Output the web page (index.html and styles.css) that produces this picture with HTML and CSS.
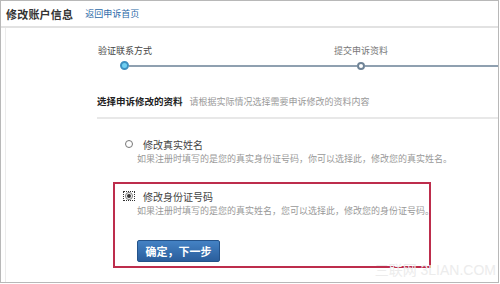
FILE: index.html
```html
<!DOCTYPE html>
<html lang="zh-CN">
<head>
  <meta charset="UTF-8">
  <title>修改账户信息</title>
  <link rel="stylesheet" href="styles.css">
</head>
<body>

  <div class="page">
    <div class="header">
      <span class="title">修改账户信息</span>
      <a class="back" href="#">返回申诉首页</a>
    </div>

    <div class="content">
      <div class="steps">
        <div class="labels">
          <span class="step-label current">验证联系方式</span>
          <span class="step-label">提交申诉资料</span>
        </div>
        <div class="track">
          <span class="dot active"></span>
          <span class="line first"></span>
          <span class="dot"></span>
          <span class="line rest"></span>
        </div>
      </div>

      <div class="section">
        <div class="section-head">
          <span class="section-title">选择申诉修改的资料</span>
          <span class="section-note">请根据实际情况选择需要申诉修改的资料内容</span>
        </div>

        <div class="options">
          <div class="option">
            <div class="option-head">
              <span class="radio-wrap"><span class="radio"></span></span>
              <span class="option-name">修改真实姓名</span>
            </div>
            <div class="option-desc">如果注册时填写的是您的真实身份证号码，你可以选择此，修改您的真实姓名。</div>
          </div>

          <div class="option selected">
            <div class="option-head">
              <span class="radio-wrap focus"><span class="radio checked"></span></span>
              <span class="option-name">修改身份证号码</span>
            </div>
            <div class="option-desc">如果注册时填写的是您的真实姓名，您可以选择此，修改您的身份证号码。</div>
            <button class="next">确定，下一步</button>
          </div>
        </div>
      </div>
    </div>

    <div class="watermark">三联网 3LIAN.COM</div>
  </div>

</body>
</html>
```

FILE: styles.css
```css
body {
  margin: 0;
  font-family: "Noto Sans CJK SC", "Noto Sans", sans-serif;
  background: #ffffff;
}

.page {
  position: relative;
  width: 499px;
  height: 283px;
  box-sizing: border-box;
  border: 1px solid #b8b8b8;
  overflow: hidden;
}

.header {
  height: 25px;
  display: flex;
  align-items: center;
  padding-left: 5px;
  border-bottom: 2px solid #e2e2e2;
}

.title {
  font-size: 11px;
  font-weight: bold;
  color: #333;
  letter-spacing: 0.2px;
}

.back {
  margin-left: 12px;
  font-size: 9px;
  color: #2d6aa8;
  text-decoration: none;
}

.content {
  margin-left: 4px;
  border-left: 1px solid #ececec;
  height: 255px;
}

.steps {
  padding-top: 17px;
}

.labels {
  display: flex;
  height: 12px;
  line-height: 12px;
  margin-left: 92px;
}

.step-label {
  font-size: 9px;
  color: #777;
}

.step-label.current {
  color: #444;
  margin-right: 182px;
}

.track {
  display: flex;
  align-items: center;
  height: 9px;
  margin-top: 4px;
  margin-left: 114px;
}

.dot {
  width: 8px;
  height: 8px;
  box-sizing: border-box;
  border: 2px solid #6f8396;
  border-radius: 50%;
  background: #fff;
  flex: none;
}

.dot.active {
  width: 9px;
  height: 9px;
  border: 2px solid #3d90c0;
  background: #6fd0f2;
}

.line {
  height: 2px;
  background: #8fa0b0;
}

.line.first {
  width: 228px;
}

.line.rest {
  flex: 1;
}

.section {
  margin-left: 91px;
  margin-top: 24px;
}

.section-head {
  display: flex;
  align-items: center;
  height: 14px;
  padding-bottom: 9px;
  border-bottom: 2px solid #e8e8e8;
}

.section-title {
  font-size: 9.5px;
  font-weight: bold;
  color: #222;
}

.section-note {
  margin-left: 7px;
  font-size: 9px;
  color: #999;
}

.options {
  display: flex;
  flex-direction: column;
  gap: 10px;
  margin-top: 11px;
  margin-left: 16px;
  width: 318px;
}

.option {
  border: 2px solid transparent;
  padding: 5px 0 4px;
}

.option.selected {
  border-color: #bd2d4c;
}

.option-head {
  display: flex;
  align-items: center;
  height: 14px;
}

.radio-wrap {
  display: flex;
  align-items: center;
  justify-content: center;
  width: 12px;
  height: 10px;
  box-sizing: border-box;
  margin-left: 8px;
}

.radio-wrap.focus {
  border: 1px dotted #333;
}

.radio {
  width: 8px;
  height: 8px;
  box-sizing: border-box;
  border: 1px solid #777;
  border-radius: 50%;
  background: #fff;
  position: relative;
}

.radio.checked::after {
  content: "";
  position: absolute;
  left: 1px;
  top: 1px;
  width: 4px;
  height: 4px;
  border-radius: 50%;
  background: #333;
}

.option-name {
  margin-left: 8px;
  font-size: 10px;
  color: #444;
}

.option-desc {
  margin-top: 1px;
  padding-left: 22px;
  height: 14px;
  line-height: 14px;
  font-size: 9px;
  color: #999;
  white-space: nowrap;
}

.next {
  display: block;
  margin: 22px 0 0 22px;
  width: 83px;
  height: 22px;
  padding: 0;
  border: 1px solid #24538a;
  border-radius: 2px;
  background: linear-gradient(#4482c4, #2a5e9c);
  color: #fff;
  font-family: "Noto Sans CJK SC", sans-serif;
  font-size: 11px;
  font-weight: bold;
}

.watermark {
  position: absolute;
  right: 2px;
  bottom: 3px;
  font-family: "Liberation Sans", "Noto Sans CJK SC", sans-serif;
  font-size: 14px;
  color: #ececec;
}
```
